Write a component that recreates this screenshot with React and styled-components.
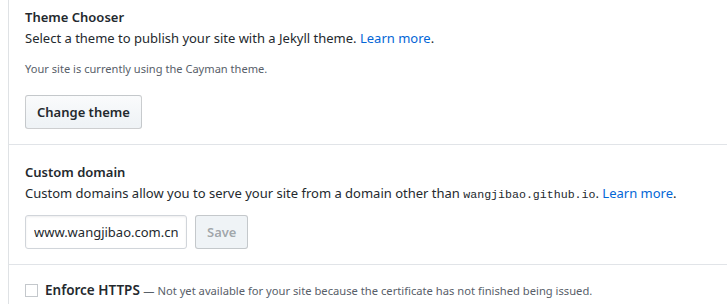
import React from "react";
import styled, { createGlobalStyle } from "styled-components";

const GlobalStyle = createGlobalStyle`
  body {
    margin: 0;
    background: #fff;
    font-family: "Noto Sans", "Liberation Sans", sans-serif;
    font-size: 13px;
    color: #24292e;
  }
`;

const Panel = styled.div`
  margin-left: 8px;
  border-left: 1px solid #dfe2e5;
  overflow: hidden;
`;

const Section = styled.section`
  padding: ${(p) => p.$pad || "7px 16px 15px"};
  border-top: ${(p) => (p.$first ? "none" : "1px solid #e1e4e8")};
`;

const Title = styled.h3`
  margin: 0;
  font-size: 13px;
  font-weight: 600;
  line-height: 20px;
`;

const Text = styled.p`
  margin: 0;
  font-size: 13px;
  line-height: 22px;
  white-space: nowrap;
`;

const Note = styled.p`
  margin: 11px 0 0;
  font-size: 11.1px;
  line-height: 18px;
  color: #586069;
`;

const Link = styled.a`
  color: #0366d6;
  text-decoration: none;
`;

const Code = styled.code`
  font-family: "Liberation Mono", "DejaVu Sans Mono", monospace;
  font-size: 11.6px;
`;

const Button = styled.button`
  height: 34px;
  padding: 0 11px;
  font-family: inherit;
  font-size: 13px;
  font-weight: 600;
  color: ${(p) => (p.disabled ? "rgba(36,41,46,0.4)" : "#24292e")};
  background: ${(p) =>
    p.disabled
      ? "#eff3f6"
      : "linear-gradient(-180deg, #fafbfc 0%, #eff3f6 90%)"};
  border: 1px solid rgba(27, 31, 35, 0.2);
  border-radius: 3px;
`;

const Row = styled.div`
  display: flex;
  align-items: center;
  gap: ${(p) => p.$gap || "8px"};
  margin-top: ${(p) => p.$top || 0};
`;

const Input = styled.input`
  box-sizing: border-box;
  width: 162px;
  height: 34px;
  padding: 0 8px;
  font-family: inherit;
  font-size: 13px;
  color: #24292e;
  border: 1px solid #d1d5da;
  border-radius: 3px;
  box-shadow: inset 0 1px 2px rgba(27, 31, 35, 0.075);
`;

const Checkbox = styled.span`
  width: 13px;
  height: 13px;
  box-sizing: border-box;
  border: 1px solid #c4c8cc;
  background: #fff;
  flex-shrink: 0;
`;

const Label = styled.span`
  font-size: 13.5px;
  font-weight: 600;
  line-height: 20px;
  white-space: nowrap;
`;

const Hint = styled.span`
  font-size: 11.2px;
  font-weight: 400;
  color: #586069;
`;

export default function App() {
  return (
    <>
      <GlobalStyle />
      <Panel>
        <Section $first>
          <Title>Theme Chooser</Title>
          <Text>
            Select a theme to publish your site with a Jekyll theme.{" "}
            <Link href="#">Learn more</Link>.
          </Text>
          <Note>Your site is currently using the Cayman theme.</Note>
          <Row $top="17px">
            <Button>Change theme</Button>
          </Row>
        </Section>
        <Section $pad="17px 16px 15px">
          <Title>Custom domain</Title>
          <Text>
            Custom domains allow you to serve your site from a domain other than{" "}
            <Code>wangjibao.github.io</Code>. <Link href="#">Learn more</Link>.
          </Text>
          <Row $top="9px">
            <Input defaultValue="www.wangjibao.com.cn" />
            <Button disabled>Save</Button>
          </Row>
        </Section>
        <Section $pad="15px 16px 4px">
          <Row $gap="7px">
            <Checkbox />
            <Label>
              Enforce HTTPS{" "}
              <Hint>
                — Not yet available for your site because the certificate has
                not finished being issued.
              </Hint>
            </Label>
          </Row>
        </Section>
      </Panel>
    </>
  );
}
